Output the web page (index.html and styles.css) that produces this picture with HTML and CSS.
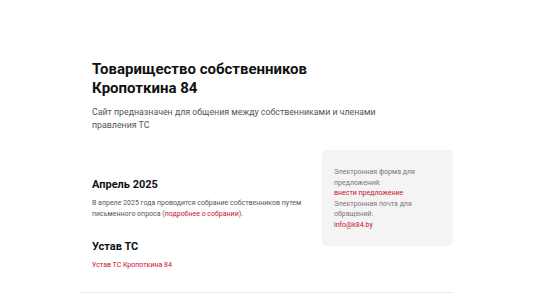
FILE: index.html
```html
<!DOCTYPE html>
<html lang="ru">
<head>
<meta charset="UTF-8" />
<meta name="viewport" content="width=device-width, initial-scale=1.0" />
<title>ТС Кропоткина 84</title>
<link rel="stylesheet" href="styles.css">
</head>
<body>

<div class="container">
  <header class="intro">
    <h1>Товарищество собственников<br>Кропоткина 84</h1>
    <p class="lead">Сайт предназначен для общения между собственниками и членами правления ТС</p>
  </header>

  <div class="columns">
    <main class="main">
      <section class="news">
        <h2>Апрель 2025</h2>
        <p>В апреле 2025 года проводится собрание собственников путем письменного опроса (<a href="#">подробнее о собрании</a>).</p>
      </section>
      <section class="news">
        <h2>Устав ТС</h2>
        <p><a href="#">Устав ТС Кропоткина 84</a></p>
      </section>
    </main>

    <aside class="card">
      <p>Электронная форма для предложений:</p>
      <p><a href="#">внести предложение</a></p>
      <p>Электронная почта для обращений:</p>
      <p><a href="mailto:info@k84.by">info@k84.by</a></p>
    </aside>
  </div>

  <hr class="divider" />
</div>

</body>
</html>
```

FILE: styles.css
```css
* {
  box-sizing: border-box;
  margin: 0;
  padding: 0;
}

body {
  font-family: Roboto, 'Liberation Sans', sans-serif;
  background: #fff;
  color: #111;
}

a {
  color: #c8102e;
  text-decoration: none;
}

.container {
  max-width: 373px;
  margin: 0 auto;
}

/* Header */
.intro {
  padding: 60px 12px 0;
}

h1 {
  font-size: 15px;
  line-height: 19px;
  font-weight: 700;
  color: #111;
}

.lead {
  margin-top: 8px;
  font-size: 8.8px;
  line-height: 13px;
  color: #555;
  max-width: 300px;
}

/* Two columns */
.columns {
  display: grid;
  grid-template-columns: 1fr 131px;
  gap: 12px;
  margin-top: 18px;
}

.main {
  padding: 27px 0 0 12px;
}

h2 {
  font-size: 11px;
  line-height: 15px;
  font-weight: 700;
  color: #111;
}

.news p {
  margin-top: 6px;
  font-size: 7px;
  line-height: 10.5px;
  color: #555;
}

.news + .news {
  margin-top: 20px;
}

.card {
  background: #f4f4f4;
  border-radius: 5px;
  padding: 17px 12px 16px;
  font-size: 7px;
  line-height: 10.5px;
  color: #777;
  align-self: start;
}

.divider {
  margin-top: 21px;
  border: none;
  border-top: 1px solid #ececec;
}
```
